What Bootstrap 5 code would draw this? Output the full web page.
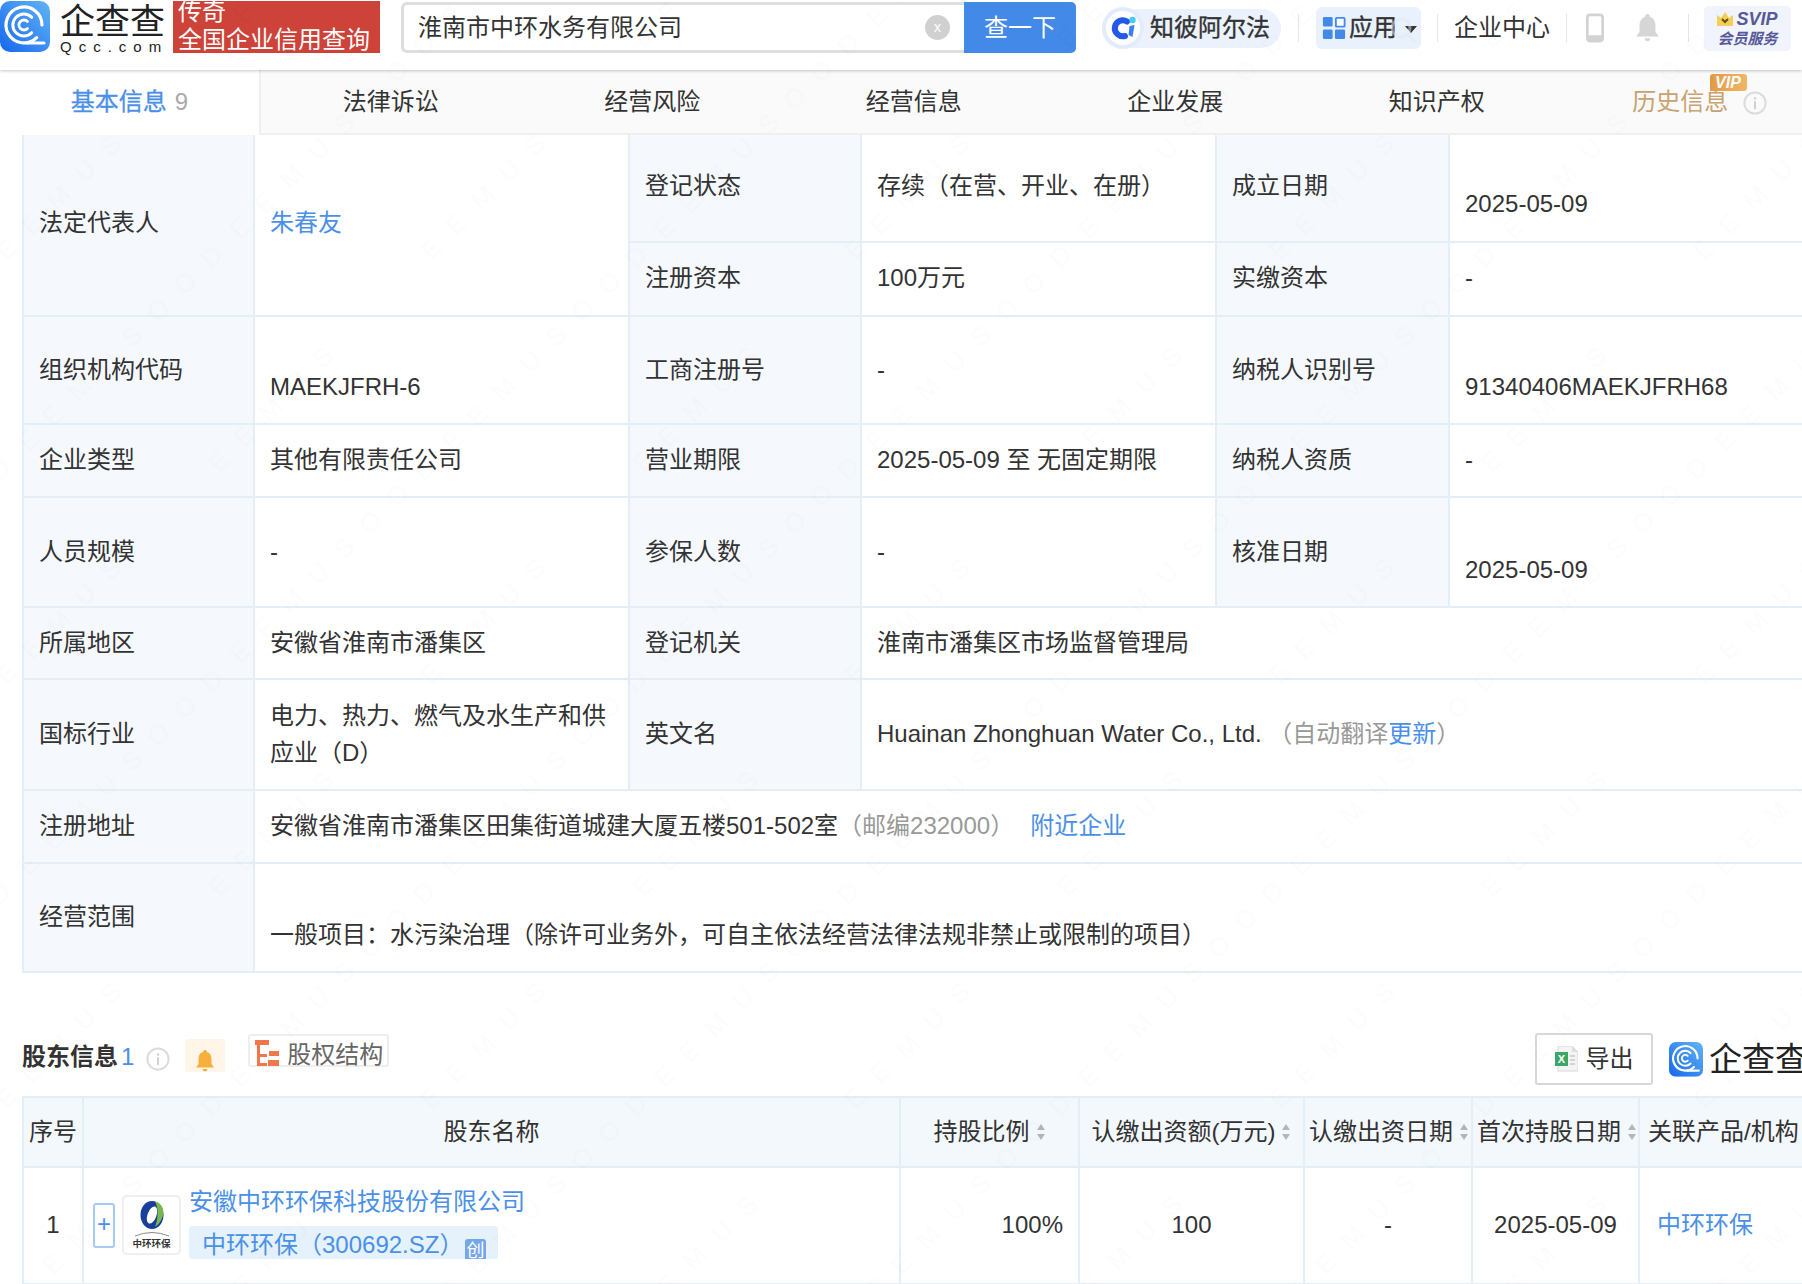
<!DOCTYPE html>
<html lang="zh-CN">
<head>
<meta charset="utf-8">
<title>淮南市中环水务有限公司</title>
<link rel="stylesheet" href="https://cdn.jsdelivr.net/npm/bootstrap@5.3.0/dist/css/bootstrap.min.css">
<style>
html,body{width:1802px;height:1284px;overflow:hidden;background:#fff}
body{font-family:"Liberation Sans","Noto Sans CJK SC",sans-serif;font-size:24px;color:#333;position:relative}
a{text-decoration:none;color:#4a90e8}
.cn-gray{color:#999}
/* header */
.top-bar{height:70px;padding-bottom:14px;background:#fff;box-shadow:0 1px 3px rgba(0,0,0,.22);position:relative;z-index:2;overflow:hidden}
.logo-mark{width:50px;height:52px;flex:none}
.word-box{margin-left:10px;margin-top:2px;width:104px;flex:none;line-height:1}
.word-big{font-size:35px;color:#222;line-height:34px;white-space:nowrap}
.word-small{font-size:15px;letter-spacing:7px;color:#222;line-height:15px;white-space:nowrap}
.ad-box{width:207px;height:52px;margin-left:9px;margin-top:1px;background:#cd4239;color:#fff;overflow:hidden;padding-left:5px;flex:none;line-height:29px;align-self:flex-start}
.ad-first{margin-top:-4px;height:28px}
.search-wrap{margin-left:21px;margin-top:2px;width:675px;height:51px;flex:none;align-self:flex-start}
.search-inp{width:563px;height:51px;border:3px solid #dedede;border-right:0;border-radius:6px 0 0 6px;padding-left:14px;line-height:46px;color:#333;position:relative}
.clear-dot{position:absolute;left:521px;top:10px;width:25px;height:25px;border-radius:50%;background:#d0d0d0;color:#fff;font-size:14px;line-height:24px;text-align:center}
.search-go{width:112px;height:51px;background:#4289e8;color:#fff;border:0;border-radius:0 5px 5px 0;font-size:24px;padding:0}
.alpha-pill{margin-left:26px;width:179px;height:39px;background:#ebf1fd;border-radius:20px;position:relative;padding-left:48px;-webkit-text-stroke:.35px #333;line-height:38px;flex:none;white-space:nowrap;color:#333}
.alpha-ring{position:absolute;left:-1px;top:-3px;width:45px;height:45px}
.v-line{width:1px;height:28px;background:#e5e5e5;flex:none}
.line-a{margin-left:17px}
.apps-box{width:105px;height:42px;margin-left:17px;background:#e9f1fc;border-radius:6px;flex:none;position:relative;-webkit-text-stroke:.35px #333;line-height:42px;padding-left:6px;white-space:nowrap}
.apps-icon{width:24px;height:24px;vertical-align:-4px;margin-right:3px}
.caret-down{display:inline-block;width:0;height:0;border-left:6px solid transparent;border-right:6px solid transparent;border-top:7px solid #333;margin-left:8px;vertical-align:3px}
.apps-glass{position:absolute;left:72px;top:8px;width:30px;height:30px;opacity:.5}
.phone-ico{margin-left:19px;flex:none}
.bell-top{margin-left:31px;flex:none}
.line-b{margin-left:28px}
.svip-box{width:87px;height:45px;margin-left:15px;background:#f1f3fd;border-radius:5px;color:#565a98;font-weight:700;font-style:italic;text-align:center;flex:none;padding-top:3px}
.svip-a{font-size:18px;line-height:20px;white-space:nowrap}
.svip-a svg{vertical-align:-1px;margin-right:3px}
.svip-b{font-size:15px;line-height:20px;white-space:nowrap}
/* tabs */
.tab-strip{height:65px;background:#fafafa;border-bottom:2px solid #efefef;width:1829px;line-height:64px}
.tab-one{width:261.5px;text-align:center;flex:none;white-space:nowrap;position:relative;color:#333}
.tab-on{width:261px;margin-right:-1px;background:#fff;color:#4a90e8;-webkit-text-stroke:.3px #4a90e8;border-right:2px solid #efefef;height:65px}
.tab-on span{color:#aaa;-webkit-text-stroke:0;margin-left:8px}
.tab-vip{color:#c9a272;padding-left:3px}
.vip-flag{position:absolute;left:142px;top:4px;width:37px;height:17px;border-radius:3px 3px 3px 0;background:linear-gradient(90deg,#e39a45,#f1b566);color:#fff;font-size:16px;font-weight:700;font-style:italic;line-height:17px;text-align:center}
.info-ico{width:24px;height:24px;flex:none}
.tab-vip .info-ico{margin-left:15px;vertical-align:-5px}
/* tables */
.sheet-wrap{margin-left:22px;width:1780px;overflow:hidden}
.sheet{table-layout:fixed;border-collapse:collapse;margin:0;--bs-table-border-color:#e4eef6;--bs-table-bg:transparent;--bs-table-color:#333;border-color:#e4eef6}
.sheet td,.sheet th{border:2px solid #e4eef6;padding:0 15px 2px;vertical-align:middle;font-weight:400;line-height:37px}
.sheet-one{width:1826px}
.sheet-one tr:first-child td{border-top:0}
.sheet .lbl{background:#f5f9fd;--bs-table-bg:#f5f9fd}
.sheet .low-val{padding-top:34px;padding-bottom:0}
.sheet .rw107 td{padding-bottom:5px}
.sheet .rw74 td{padding-bottom:4px}
.sheet .rw107 .low-val{padding-top:31px;padding-bottom:0}
.sheet .rw108 .low-val{padding-top:32px}
.rw107{height:107px}.rw74{height:74px}.rw108{height:108px}.rw73{height:73px}.rw110{height:110px}.rw72{height:72px}.rw111{height:111px}.rw109{height:109px}
.sec-row{height:52px;margin:60px 0 11px 22px;width:1786px;overflow:hidden}
.sec-title{font-weight:700;color:#333;white-space:nowrap;padding-bottom:4px}
.sec-title span{color:#4a90e8;font-weight:500;margin-left:3px}
.sec-title + .info-ico{margin-left:12px}
.bell-box{width:40px;height:33px;background:#fff6e9;border-radius:3px;margin-left:15px;align-self:flex-start;margin-top:6px;text-align:center;flex:none}
.bell-box svg{margin-top:5px}
.struct-btn{margin-left:23px;width:141px;height:33px;border:2px solid #eee;border-radius:3px;align-self:flex-start;margin-top:1px;color:#666;white-space:nowrap;line-height:37px;padding-left:5px;flex:none}
.struct-btn svg{vertical-align:-5px;margin-right:6px}
.export-btn{width:118px;height:52px;border:2px solid #d8d8d8;border-radius:3px;background:#fff;font-size:24px;color:#333;padding:0;flex:none;margin-left:auto}
.mini-logo{width:34px;height:36px;margin-left:16px;flex:none}
.word-cut{font-size:33px;color:#222;margin-left:6px;white-space:nowrap;line-height:1;flex:none}
.sheet-two{width:1791px}
.sheet-two th{padding:0 4px 2px;background:#f3f8fd;--bs-table-bg:#f3f8fd;text-align:center;white-space:nowrap;height:70px}
.sheet-two th:last-child{text-align:left;padding-left:8px}
.sheet-two td{height:117px;text-align:center}
.sheet-two td:last-child{padding-left:17px}
.sort-ico{width:10px;height:18px;margin-left:6px;vertical-align:-1px}
.sheet .name-cell{padding:0 0 0 9px;text-align:left;overflow:hidden}
.plus-btn{width:22px;height:45px;border:2px solid #a7cbf5;border-radius:3px;color:#4a90e8;line-height:38px;text-align:center;font-size:24px;flex:none;background:#fff}
.org-logo{width:59px;height:60px;border:2px solid #efefef;border-radius:5px;margin-left:7px;flex:none;background:#fff;text-align:center;overflow:hidden;padding-top:3px}
.org-logo svg{display:block;margin:0 auto}
.org-name{font-size:9.5px;font-weight:700;line-height:11px;color:#333;white-space:nowrap}
.co-col{margin-left:8px;line-height:1.2;flex:none;position:relative;top:-2px}
.stock-tag{width:309px;height:33px;background:#e5f1fb;border-radius:3px;margin-top:9px;padding-left:13px;white-space:nowrap;line-height:37px;overflow:hidden;position:relative;color:#4a90e8}
.chuang{position:absolute;left:276px;top:13px;width:21px;height:26px;background:#74a6e8;color:#fff;font-size:18px;line-height:24px;text-align:center;border-radius:3px 3px 0 0}
.wm-layer{position:absolute;left:0;top:0;width:1802px;height:1284px;pointer-events:none;z-index:5}
.sprite-defs{position:absolute}
</style>
</head>
<body>
<svg width="0" height="0" class="sprite-defs">
  <defs>
    <linearGradient id="lg" x1="0" y1="1" x2="1" y2="0"><stop offset="0" stop-color="#1667ee"/><stop offset="1" stop-color="#62b4f5"/></linearGradient>
    <symbol id="qlogo" viewBox="0 0 50 52">
      <rect x="0" y="1" width="50" height="51" rx="10" fill="url(#lg)"/>
      <g fill="none" stroke="#fff" stroke-linecap="round">
        <path d="M36.700 37.700 A18 18 0 1 1 42 25" stroke-width="3.200"/>
        <path d="M31.700 32.700 A11 11 0 1 1 31.700 17.300" stroke-width="3"/>
        <path d="M27.500 28.500 A5 5 0 1 1 27.500 21.500" stroke-width="2.800"/>
        <path d="M27 43 H44" stroke-width="3.200"/>
      </g>
    </symbol>
    <symbol id="infoi" viewBox="0 0 24 24">
      <circle cx="12" cy="12" r="10.600" fill="none" stroke="#dcdcdc" stroke-width="2"/>
      <circle cx="12" cy="7.400" r="1.200" fill="#d0d0d0"/>
      <rect x="11" y="10.200" width="2" height="8" fill="#d0d0d0"/>
    </symbol>
    <symbol id="sorti" viewBox="0 0 10 18">
      <path d="M5 1 L9 7 H1Z M5 17 L9 11 H1Z" fill="#b5b5b5"/>
    </symbol>
  </defs>
</svg>

<header class="top-bar d-flex align-items-center">
  <svg class="logo-mark align-self-start" viewBox="0 0 50 52"><use href="#qlogo"/></svg>
  <div class="word-box">
    <div class="word-big">企查查</div>
    <div class="word-small">Qcc.com</div>
  </div>
  <div class="ad-box">
    <div class="ad-first">传奇</div>
    <div>全国企业信用查询</div>
  </div>
  <div class="search-wrap d-flex">
    <div class="search-inp">淮南市中环水务有限公司<span class="clear-dot">x</span></div>
    <button class="search-go" type="button">查一下</button>
  </div>
  <div class="alpha-pill">
    <svg class="alpha-ring" viewBox="0 0 45 45">
      <circle cx="22" cy="22" r="21" fill="#e3ecfb"/>
      <circle cx="22" cy="22" r="17" fill="#fff"/>
      <path d="M26 15.500 A8 8 0 1 0 24 30" fill="none" stroke="#2458e6" stroke-width="6" stroke-linecap="round"/>
      <circle cx="31.500" cy="14" r="3.200" fill="#45cdf5"/>
      <path d="M28.500 20 L33.500 19 L31.500 31 L27.500 29Z" fill="#3b80f0"/>
    </svg>
    知彼阿尔法
  </div>
  <div class="v-line line-a"></div>
  <div class="apps-box">
    <svg class="apps-glass" viewBox="0 0 30 30"><circle cx="13" cy="13" r="9" fill="none" stroke="#dfe9f8" stroke-width="3"/><path d="M20 20 L28 28" stroke="#dfe9f8" stroke-width="3"/></svg>
    <svg class="apps-icon" viewBox="0 0 26 26">
      <rect x="1" y="1" width="10.500" height="10.500" rx="1.500" fill="#4289e8"/>
      <rect x="15" y="2" width="9.500" height="9.500" rx="1" fill="#fff" stroke="#4289e8" stroke-width="2"/>
      <rect x="1" y="14.500" width="10.500" height="10.500" rx="1.500" fill="#4289e8"/>
      <rect x="14" y="14.500" width="11" height="10.500" rx="1.500" fill="#4289e8"/>
    </svg>应用<span class="caret-down"></span>
  </div>
  <div class="v-line ms-3"></div>
  <div class="ms-3 text-nowrap">企业中心</div>
  <div class="v-line ms-3"></div>
  <svg class="phone-ico" width="18" height="30" viewBox="0 0 20 32">
    <rect x="1.500" y="1.500" width="17" height="29" rx="3" fill="#fff" stroke="#d3d3d3" stroke-width="3"/>
    <rect x="1.500" y="24" width="17" height="6.500" rx="2" fill="#d3d3d3"/>
  </svg>
  <svg class="bell-top" width="25" height="30" viewBox="0 0 26 32">
    <path d="M13 1 C15 1 15.500 2.500 15.500 4 C20 5.500 21.500 9.500 21.500 14 L21.500 20 L25 25 H1 L4.500 20 V14 C4.500 9.500 6 5.500 10.500 4 C10.500 2.500 11 1 13 1Z" fill="#d6d6d6"/>
    <path d="M10 27 H16 A3 3 0 0 1 10 27Z" fill="#d6d6d6"/>
  </svg>
  <div class="v-line line-b"></div>
  <div class="svip-box">
    <div class="svip-a"><svg width="16" height="14" viewBox="0 0 16 14"><path d="M0 3 L4 6 L8 0 L12 6 L16 3 V14 H0Z" fill="#f6cf58"/><path d="M5 7 L8 10 L11 7" fill="none" stroke="#6b4a12" stroke-width="2"/></svg>SVIP</div>
    <div class="svip-b">会员服务</div>
  </div>
</header>

<nav class="tab-strip d-flex">
  <div class="tab-one tab-on">基本信息<span>9</span></div>
  <div class="tab-one">法律诉讼</div>
  <div class="tab-one">经营风险</div>
  <div class="tab-one">经营信息</div>
  <div class="tab-one">企业发展</div>
  <div class="tab-one">知识产权</div>
  <div class="tab-one tab-vip">历史信息<svg class="info-ico"><use href="#infoi"/></svg><div class="vip-flag">VIP</div></div>
</nav>

<div class="sheet-wrap">
  <table class="table sheet sheet-one">
    <colgroup><col style="width:231px"><col style="width:375px"><col style="width:232px"><col style="width:355px"><col style="width:233px"><col style="width:400px"></colgroup>
    <tbody>
      <tr class="rw107"><td class="lbl" rowspan="2">法定代表人</td><td rowspan="2"><a href="#">朱春友</a></td><td class="lbl">登记状态</td><td>存续（在营、开业、在册）</td><td class="lbl">成立日期</td><td class="low-val">2025-05-09</td></tr>
      <tr class="rw74"><td class="lbl">注册资本</td><td>100万元</td><td class="lbl">实缴资本</td><td>-</td></tr>
      <tr class="rw108"><td class="lbl">组织机构代码</td><td class="low-val">MAEKJFRH-6</td><td class="lbl">工商注册号</td><td>-</td><td class="lbl">纳税人识别号</td><td class="low-val">91340406MAEKJFRH68</td></tr>
      <tr class="rw73"><td class="lbl">企业类型</td><td>其他有限责任公司</td><td class="lbl">营业期限</td><td>2025-05-09 至 无固定期限</td><td class="lbl">纳税人资质</td><td>-</td></tr>
      <tr class="rw110"><td class="lbl">人员规模</td><td>-</td><td class="lbl">参保人数</td><td>-</td><td class="lbl">核准日期</td><td class="low-val">2025-05-09</td></tr>
      <tr class="rw72"><td class="lbl">所属地区</td><td>安徽省淮南市潘集区</td><td class="lbl">登记机关</td><td colspan="3">淮南市潘集区市场监督管理局</td></tr>
      <tr class="rw111"><td class="lbl">国标行业</td><td>电力、热力、燃气及水生产和供应业（D）</td><td class="lbl">英文名</td><td colspan="3">Huainan Zhonghuan Water Co., Ltd. <span class="cn-gray">（自动翻译<a href="#">更新</a>）</span></td></tr>
      <tr class="rw73"><td class="lbl">注册地址</td><td colspan="5">安徽省淮南市潘集区田集街道城建大厦五楼501-502室<span class="cn-gray">（邮编232000）</span><a href="#" class="ms-3">附近企业</a></td></tr>
      <tr class="rw109"><td class="lbl">经营范围</td><td colspan="5" class="low-val">一般项目：水污染治理（除许可业务外，可自主依法经营法律法规非禁止或限制的项目）</td></tr>
    </tbody>
  </table>
</div>

<section class="sec-row d-flex align-items-center">
  <div class="sec-title">股东信息<span>1</span></div>
  <svg class="info-ico"><use href="#infoi"/></svg>
  <div class="bell-box">
    <svg width="18" height="22" viewBox="0 0 18 22"><path d="M9 0 C10.500 0 11 1 11 2 C14.500 3 15.500 6 15.500 9.500 V14 L18 17.500 H0 L2.500 14 V9.500 C2.500 6 3.500 3 7 2 C7 1 7.500 0 9 0Z" fill="#f7b03e"/><path d="M6.500 19 H11.500 A2.500 2.500 0 0 1 6.500 19Z" fill="#f7b03e"/></svg>
  </div>
  <div class="struct-btn">
    <svg width="26" height="28" viewBox="0 0 26 28"><rect x="0" y="0" width="14" height="5" fill="#f0784a"/><rect x="2" y="5" width="3" height="20" fill="#f0784a"/><rect x="2" y="14" width="10" height="3" fill="#f0784a"/><rect x="14" y="11" width="10" height="5" fill="#f0784a"/><rect x="2" y="23" width="10" height="3" fill="#f0784a"/><rect x="13" y="20" width="11" height="6" fill="#f0784a"/></svg>股权结构
  </div>
  <button class="export-btn d-flex align-items-center justify-content-center" type="button">
    <svg width="23" height="26" viewBox="0 0 23 26" class="me-2"><path d="M3 0 H17 L23 6 V25 H3Z" fill="#f4f4f4" stroke="#d8d8d8"/><path d="M17 0 L23 6 H17Z" fill="#ddd"/><rect x="0" y="6" width="13" height="14" fill="#3ea765"/><text x="6.500" y="17" font-size="11" font-weight="700" fill="#fff" text-anchor="middle">X</text><path d="M15 10 H20 M15 14 H20 M15 18 H20" stroke="#c9c9c9" stroke-width="1.500"/></svg>
    导出
  </button>
  <svg class="mini-logo" viewBox="0 0 50 52"><use href="#qlogo"/></svg>
  <div class="word-cut">企查查</div>
</section>

<div class="sheet-wrap">
  <table class="table sheet sheet-two">
    <colgroup><col style="width:60px"><col style="width:817px"><col style="width:179px"><col style="width:225px"><col style="width:168px"><col style="width:167px"><col style="width:175px"></colgroup>
    <thead>
      <tr>
        <th>序号</th><th>股东名称</th>
        <th>持股比例<svg class="sort-ico"><use href="#sorti"/></svg></th>
        <th>认缴出资额(万元)<svg class="sort-ico"><use href="#sorti"/></svg></th>
        <th>认缴出资日期<svg class="sort-ico"><use href="#sorti"/></svg></th>
        <th>首次持股日期<svg class="sort-ico"><use href="#sorti"/></svg></th>
        <th>关联产品/机构</th>
      </tr>
    </thead>
    <tbody>
      <tr>
        <td>1</td>
        <td class="name-cell">
          <div class="d-flex align-items-center">
            <div class="plus-btn">+</div>
            <div class="org-logo">
              <svg width="36" height="38" viewBox="0 0 36 38">
                <ellipse cx="18" cy="15" rx="11.500" ry="14" fill="#1a3f9a"/>
                <path d="M21 1.500 C28 3 31 10 28.500 17 C26.500 22 24 25 21 27 C24 19 25 9 21 1.500Z" fill="#7ab648"/>
                <ellipse cx="18" cy="15" rx="4.500" ry="9" transform="rotate(20 18 15)" fill="#fff"/>
                <path d="M1 36 Q18 29 35 36" fill="none" stroke="#888" stroke-width="1"/>
              </svg>
              <div class="org-name">中环环保</div>
            </div>
            <div class="co-col">
              <a href="#">安徽中环环保科技股份有限公司</a>
              <div class="stock-tag">中环环保（300692.SZ）<span class="chuang">创</span></div>
            </div>
          </div>
        </td>
        <td class="text-end">100%</td>
        <td>100</td>
        <td>-</td>
        <td>2025-05-09</td>
        <td class="text-start"><a href="#">中环环保</a></td>
      </tr>
    </tbody>
  </table>
</div>

<svg class="wm-layer" viewBox="0 0 1802 1284">
  <defs>
    <pattern id="wmp" width="300" height="300" patternUnits="userSpaceOnUse" patternTransform="rotate(-45)">
      <text x="0" y="40" font-size="26" letter-spacing="18" fill="#000" fill-opacity=".012">EEMUSOOD</text>
      <text x="120" y="190" font-size="26" letter-spacing="18" fill="#000" fill-opacity=".012">EEMUSOOD</text>
    </pattern>
  </defs>
  <rect width="1802" height="1284" fill="url(#wmp)"/>
</svg>
</body>
</html>
